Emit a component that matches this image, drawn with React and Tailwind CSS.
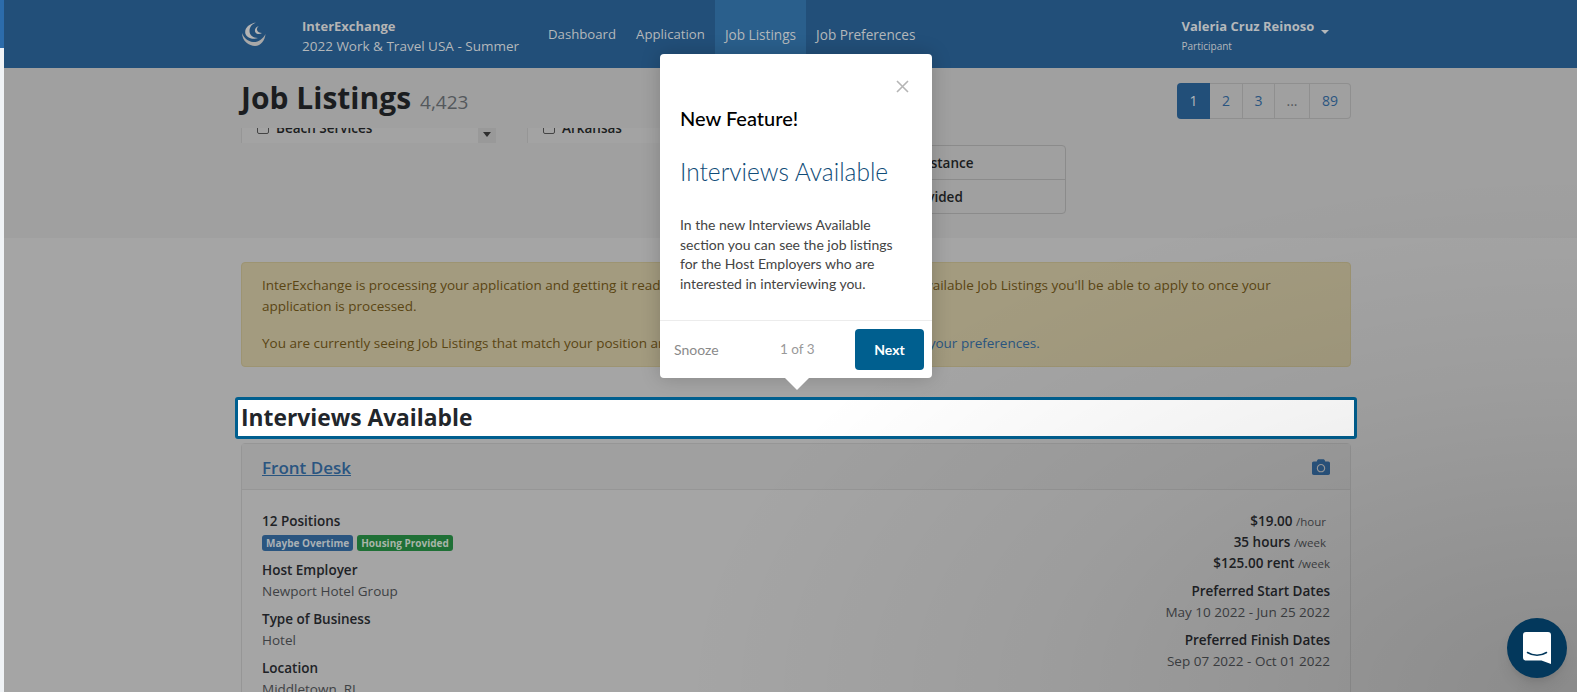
import React from "react";
import { FaCamera } from "react-icons/fa";

const sans = "font-['Open_Sans','Noto_Sans',sans-serif]";

function Logo() {
  return (
    <svg width="24" height="24" viewBox="0 0 24 24" className="shrink-0">
      <path d="M14 0.5 C6 2 2 7 3.5 12 C5 16 11 18 16 16 C11 16 7.5 13 7.5 9 C7.5 5 10 2 14 0.5 Z" fill="#b4b4b4" />
      <path d="M17 4 C13.5 5 12 8 13.5 10.5 C15 12.5 18 12.5 20 11 C17.5 11 15.5 10 15 8 C14.7 6.5 15.5 5 17 4 Z" fill="#b4b4b4" />
      <path d="M0 11 C0 19 7 24 13 24 C19 24 23 18 23.5 12 C21 17 16 20.5 11 20 C6 19.5 2 16 0 11 Z" fill="#a8a8a8" />
    </svg>
  );
}

function Field({ label, value }) {
  return (
    <div className="mb-[7px]">
      <div className="font-semibold text-[#202226]">{label}</div>
      <div className="text-[#3e4144]">{value}</div>
    </div>
  );
}

function Pay({ main, unit, pr }) {
  return (
    <div className={pr}>
      <span className="font-semibold text-[#202226]">{main}</span>{" "}
      <span className="text-[11.5px] text-[#3e4144]">{unit}</span>
    </div>
  );
}

export default function App() {
  return (
    <div className={`relative h-[692px] w-[1577px] overflow-hidden bg-[#f0f3f6] text-[13.5px] leading-[21px] ${sans}`}>
      <div className="flex h-full">
        <div className="w-1 shrink-0">
          <div className="h-12 bg-[#2c6cab]" />
        </div>
        <div className="flex min-w-0 flex-1 flex-col bg-[#a5a5a5]">
          <header className="flex h-[68px] shrink-0 bg-[#224f79] pl-[238px] text-[#b4b8bb]">
            <div className="mt-[22px]"><Logo /></div>
            <div className="ml-[36px] mt-[16px] w-[236px] leading-[20px] text-[13.5px]">
              <div className="text-[13px] font-bold text-[#b4b4b4]">InterExchange</div>
              <div className="whitespace-nowrap">2022 Work &amp; Travel USA - Summer</div>
            </div>
            <nav className="flex h-[68px] items-center text-[13.2px]">
              <a className="flex h-full items-center px-[10px]">Dashboard</a>
              <a className="flex h-full items-center px-[10px]">Application</a>
              <a className="flex h-full items-center bg-[#2a5f8c] px-[10px] text-[13.6px]">Job Listings</a>
              <a className="flex h-full items-center px-[10px] text-[13.6px]">Job Preferences</a>
            </nav>
            <div className="ml-[256px] mt-[16px] flex items-start">
              <div>
                <div className="text-[13px] font-bold text-[#b4b8bb]">Valeria Cruz Reinoso</div>
                <div className="text-[10px] leading-[18px]">Participant</div>
              </div>
              <div className="ml-[7px] mt-[14px] h-0 w-0 border-x-[4px] border-t-[4px] border-x-transparent border-t-[#b4b8bb]" />
            </div>
          </header>

          <section className="relative h-[170px] shrink-0 bg-[#a0a0a0] pl-[237px]">
            <div className="flex h-[60px] w-[1110px] items-start justify-between">
              <div className="mt-[8px] flex items-baseline whitespace-nowrap">
                <h1 className="text-[30px] font-bold leading-[44px] text-[#1b1d20]">Job Listings</h1>
                <span className="ml-[9px] text-[19px] text-[#54585c]">4,423</span>
              </div>
              <div className="mr-0 mt-[15px] flex h-9 text-sm text-[#2a5580]">
                <a className="flex w-[33px] items-center justify-center rounded-l bg-[#224f79] text-[#b4b8bb]">1</a>
                <a className="flex w-[33px] items-center justify-center border-y border-r border-[#8f8f8f]">2</a>
                <a className="flex w-[32px] items-center justify-center border-y border-r border-[#8f8f8f]">3</a>
                <a className="flex w-[35px] items-center justify-center border-y border-r border-[#8f8f8f] text-[#54585c]">...</a>
                <a className="flex w-[41px] items-center justify-center rounded-r border-y border-r border-[#8f8f8f]">89</a>
              </div>
            </div>
            <div className="flex h-[15px] overflow-hidden">
              <div className="flex h-[15px] w-[255px] border-l border-[#969696] bg-[#a3a3a3]">
                <div className="-mt-[9px] ml-[15px] flex h-[18px] flex-1 items-center gap-[7px] text-[#1b1d20] font-semibold">
                  <span className="h-3 w-3 rounded-[2px] border border-[#444]" />Beach Services
                </div>
                <div className="flex w-[18px] justify-center bg-[#999] pt-[4px]">
                  <span className="h-0 w-0 border-x-[4px] border-t-[5px] border-x-transparent border-t-[#2f2f2f]" />
                </div>
              </div>
              <div className="ml-[31px] flex h-[15px] w-[200px] border-l border-[#969696] bg-[#a3a3a3]">
                <div className="-mt-[9px] ml-[15px] flex h-[18px] items-center gap-[7px] text-[#1b1d20] font-semibold">
                  <span className="h-3 w-3 rounded-[2px] border border-[#444]" />Arkansas
                </div>
              </div>
            </div>
            <div className="absolute left-[825px] top-[77px] h-[69px] w-[237px] rounded border border-[#8b8b8b] font-semibold text-[#1b1d20]">
              <div className="flex h-[34px] items-center border-b border-[#8b8b8b] pl-[18px] pt-px">Housing Assistance</div>
              <div className="flex h-[33px] items-center pl-[18px] pt-px">Housing Provided</div>
            </div>
          </section>

          <main className="ml-[231px] w-[1122px] pt-[24px]">
            <div className="ml-[6px] w-[1110px] rounded border border-[#9d9472] bg-[#a39b7f] px-5 py-3 text-[#5a4513]">
              <p className="mb-4">InterExchange is processing your application and getting it ready to send to Employers. You may browse available Job Listings you'll be able to apply to once your application is processed.</p>
              <p>You are currently seeing Job Listings that match your position and dates. To see other listings you can edit <a className="text-[#2a5580]">your preferences.</a></p>
            </div>
            <h2 className="mt-[30px] flex h-[42px] items-center rounded-[3px] border-[3px] border-[#005f8f] bg-white pb-px pl-[3px] text-[22.8px] font-bold text-[#22262b]">Interviews Available</h2>
            <div className="ml-[6px] mt-[4px] w-[1110px] rounded-t border border-[#969696]">
              <div className="flex h-[46px] items-center justify-between border-b border-[#969696] bg-[#a0a0a0] px-5">
                <a className="mt-[2px] text-[17px] font-semibold text-[#2a5580] underline">Front Desk</a>
                <FaCamera className="text-[18px] text-[#2a5580]" />
              </div>
              <div className="flex justify-between px-5 pt-[21px]">
                <div>
                  <div className="font-semibold text-[#202226]">12 Positions</div>
                  <div className="mb-[9px] mt-[3px] flex gap-1 text-[10px] font-bold leading-[16px] text-[#a9b0b5]">
                    <span className="rounded-[3px] bg-[#2a5580] px-1">Maybe Overtime</span>
                    <span className="rounded-[3px] bg-[#1f7036] px-1 text-[#a9b5a9]">Housing Provided</span>
                  </div>
                  <Field label="Host Employer" value="Newport Hotel Group" />
                  <Field label="Type of Business" value="Hotel" />
                  <Field label="Location" value="Middletown, RI" />
                </div>
                <div className="text-right">
                  <Pay main="$19.00" unit="/hour" pr="pr-[4px]" />
                  <Pay main="35 hours" unit="/week" pr="pr-[4px]" />
                  <Pay main="$125.00 rent" unit="/week" pr="" />
                  <div className="mt-[7px]"><Field label="Preferred Start Dates" value="May 10 2022 - Jun 25 2022" /></div>
                  <Field label="Preferred Finish Dates" value="Sep 07 2022 - Oct 01 2022" />
                </div>
              </div>
            </div>
          </main>
        </div>
      </div>

      <div className="pointer-events-none absolute inset-0 bg-[radial-gradient(ellipse_900px_520px_at_100%_100%,rgba(0,0,0,0.16),rgba(0,0,0,0.05)_60%,rgba(0,0,0,0)_100%)]" />

      <div className="absolute left-[660px] top-[54px] flex h-[324px] w-[272px] flex-col rounded bg-white font-['Lato','Open_Sans',sans-serif] shadow-[0_0_20px_rgba(0,0,0,0.2)]">
        <svg width="13" height="13" viewBox="0 0 13 13" className="absolute right-[23px] top-[26px]">
          <path d="M1 1 L12 12 M12 1 L1 12" stroke="#b5b5b5" strokeWidth="1.6" fill="none" />
        </svg>
        <div className="px-5 pt-[51px]">
          <div className="text-[20px] font-medium leading-[26px] text-black">New Feature!</div>
          <div className="mt-[26px] whitespace-nowrap text-[24.5px] font-light leading-[30px] text-[#0f4c78]">Interviews Available</div>
          <p className="mt-[28px] text-[14px] leading-[19.5px] text-[#444]">In the new Interviews Available section you can see the job listings for the Host Employers who are interested in interviewing you.</p>
        </div>
        <div className="mt-auto flex h-[58px] items-center border-t border-[#ececec] pl-[14px] pr-2 text-[14px] text-[#8a8a8a]">
          <span className="w-[106px]">Snooze</span>
          <span className="w-[75px] text-[13.5px] text-[#999]">1 of 3</span>
          <button className="flex h-[41px] w-[69px] items-center justify-center rounded bg-[#005f8f] font-bold text-white">Next</button>
        </div>
        <div className="absolute left-[125px] top-[324px] h-0 w-0 border-x-[12px] border-t-[12px] border-x-transparent border-t-white" />
      </div>

      <div className="absolute left-[1507px] top-[618px] flex h-[60px] w-[60px] items-center justify-center rounded-full bg-[#03385c] shadow-lg">
        <svg width="28" height="32" viewBox="0 0 28 32">
          <path d="M3 0 H25 A3 3 0 0 1 28 3 V32 L18.5 28.5 H3 A3 3 0 0 1 0 25.5 V3 A3 3 0 0 1 3 0 Z" fill="#fff" />
          <path d="M4.5 20.5 C10 24 18 24 23.5 20.5" stroke="#03385c" strokeWidth="1.5" fill="none" strokeLinecap="round" />
        </svg>
      </div>
    </div>
  );
}
